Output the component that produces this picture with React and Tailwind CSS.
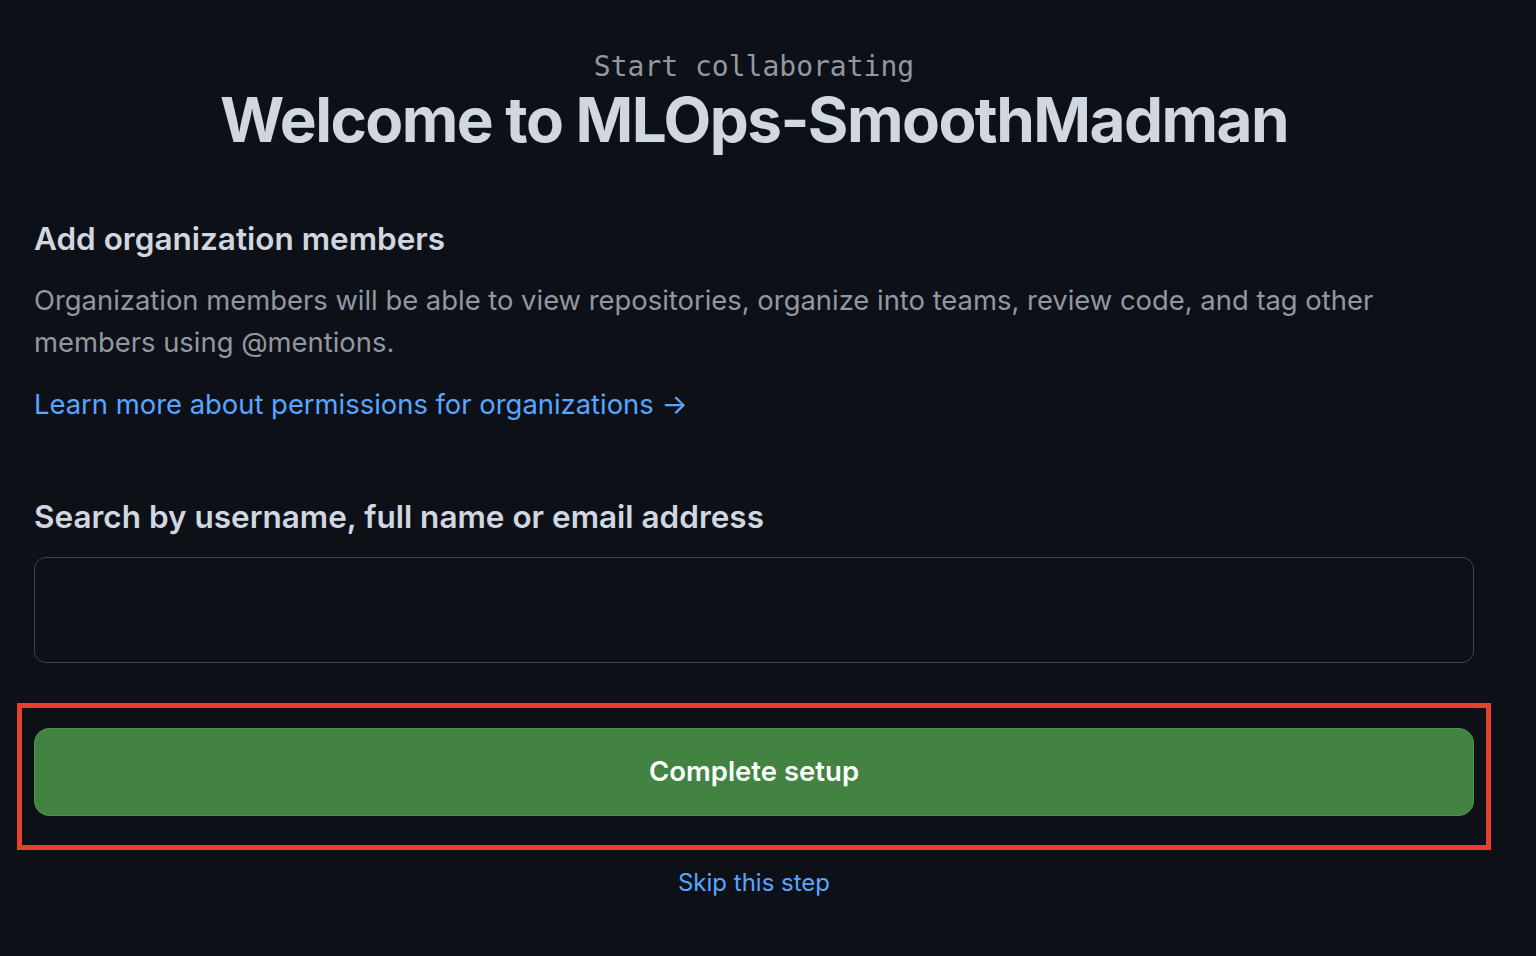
export default function App() {
  const sans = { fontFamily: 'Inter, "Liberation Sans", sans-serif' }

  return (
    <div className="min-h-[956px] w-full bg-[#0d1117]" style={sans}>
      <div className="ml-[34px] w-[1440px] pt-[49px]">
        <div className="text-center font-['DejaVu_Sans_Mono',monospace] text-[28px] leading-[36px] text-[#9198a1]">
          Start collaborating
        </div>
        <h1 className="text-center text-[62px] font-bold leading-[70px] tracking-tight text-[#d1d7e0]">
          Welcome to MLOps-SmoothMadman
        </h1>

        <h2 className="mt-[64px] text-[31.5px] font-semibold leading-[40px] text-[#d1d7e0]">
          Add organization members
        </h2>
        <p className="mt-[20px] text-[27.4px] leading-[42px] text-[#9198a1]">
          Organization members will be able to view repositories, organize into teams, review code, and tag other
          members using @mentions.
        </p>
        <a href="#" className="mt-[20px] block text-[27.4px] leading-[42px] text-[#58a6ff]">
          Learn more about permissions for organizations →
        </a>

        <label className="mt-[72px] block text-[31.5px] font-semibold leading-[40px] text-[#d1d7e0]">
          Search by username, full name or email address
        </label>
        <input
          type="text"
          className="mt-[20px] block h-[106px] w-full rounded-[12px] border border-[#3d444d] bg-[#0d1117] px-4 text-[27px] text-[#d1d7e0] outline-none"
        />

        <div className="relative mt-[65px]">
          <button className="flex h-[88px] w-full items-center justify-center rounded-[15px] border border-[#4e954c] bg-[#428342] text-[27.5px] font-semibold text-white">
            Complete setup
          </button>
          <div className="pointer-events-none absolute -top-[25px] -bottom-[34px] -left-[17px] -right-[17px] border-[5px] border-[#e8412b]" />
        </div>

        <div className="mt-[49px] text-center text-[24px] leading-[36px]">
          <a href="#" className="text-[#58a6ff]">
            Skip this step
          </a>
        </div>
      </div>
    </div>
  )
}
